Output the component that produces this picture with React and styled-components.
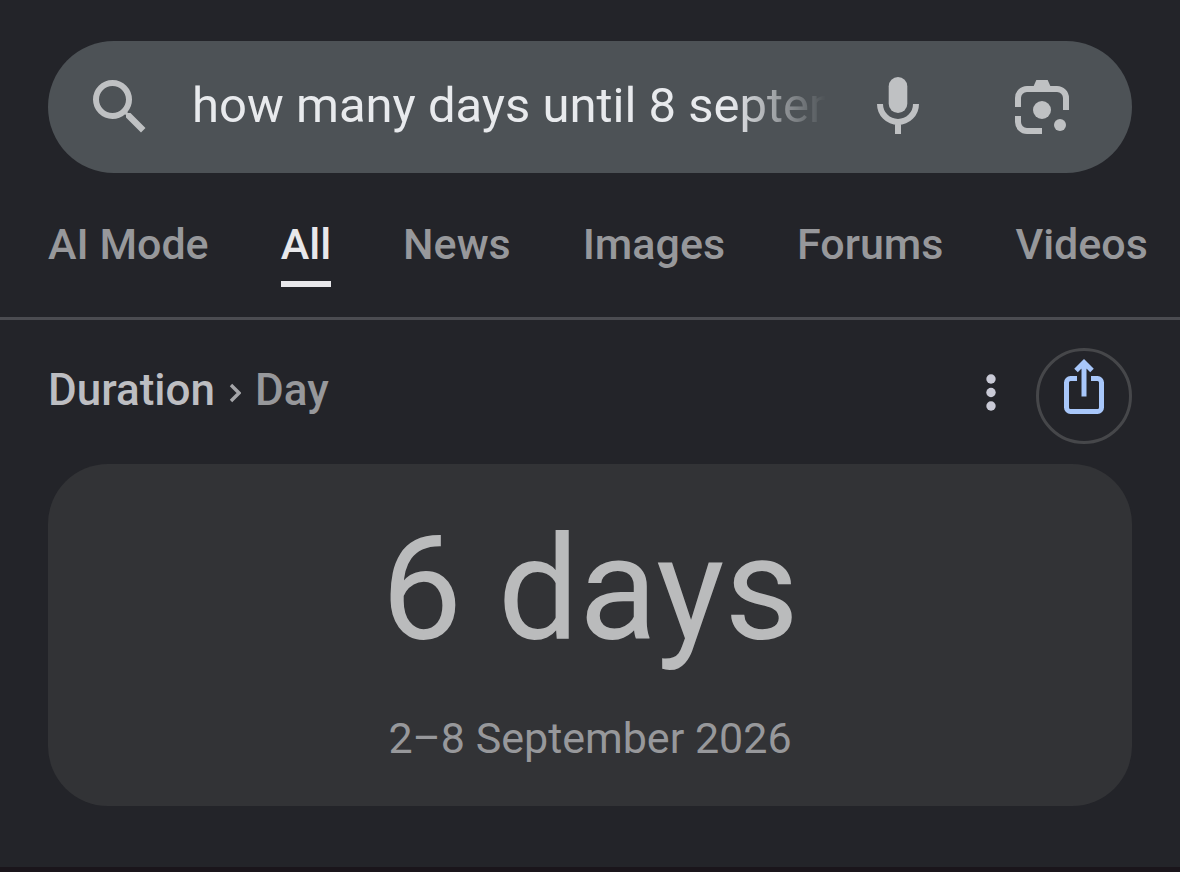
import React from "react"
import styled, { createGlobalStyle } from "styled-components"

const GlobalStyle = createGlobalStyle`
  * {
    box-sizing: border-box;
  }
  body {
    margin: 0;
    background-color: #232429;
    color: #bdbec2;
    font-family: Roboto, "Noto Sans", sans-serif;
  }
`

const Page = styled.div`
  min-height: 100vh;
  display: flex;
  flex-direction: column;
  padding-top: 41px;
  border-bottom: 5px solid #1a151b;
`

const SearchBar = styled.form`
  display: flex;
  align-items: center;
  height: 132px;
  margin: 0 48px;
  padding: 0 54px 0 36px;
  border-radius: 66px;
  background-color: #4d5256;
`

const SearchInput = styled.input`
  flex: 1;
  min-width: 0;
  height: 72px;
  margin: 0 36px;
  padding: 0 0 4px;
  border: 0;
  outline: 0;
  background: transparent;
  color: #e8eaed;
  font-family: inherit;
  font-size: 49px;
  mask-image: linear-gradient(to left, transparent, #000 96px);
`

const IconButton = styled.button`
  display: flex;
  align-items: center;
  justify-content: center;
  flex-shrink: 0;
  width: 72px;
  height: 72px;
  padding: 0;
  border: 0;
  background: transparent;
  color: ${props => props.$color || "#bfc1c3"};
  cursor: pointer;
`

const SearchActions = styled.div`
  display: flex;
  gap: 72px;
`

const Tabs = styled.nav`
  display: flex;
  gap: 72px;
  margin-top: 47px;
  padding: 0 0 30px 48px;
  border-bottom: 3px solid #4b4c51;
  overflow: hidden;
`

const Tab = styled.a`
  flex-shrink: 0;
  padding-bottom: 13px;
  border-bottom: 6px solid ${props => (props.$active ? "#e8e8eb" : "transparent")};
  color: ${props => (props.$active ? "#e8e8eb" : "#97989b")};
  font-size: 43px;
  font-weight: 500;
  line-height: 48px;
  text-decoration: none;
`

const ResultHeader = styled.header`
  display: flex;
  align-items: center;
  margin: 28px 48px 20px;
`

const Breadcrumb = styled.h2`
  flex: 1;
  display: flex;
  align-items: center;
  gap: 14px;
  margin: 0;
  padding-bottom: 12px;
  font-size: 44px;
  font-weight: 500;
  line-height: 48px;
`

const Topic = styled.span`
  color: ${props => (props.$muted ? "#97989b" : "#bdbec2")};
`

const ShareButton = styled(IconButton)`
  width: 96px;
  height: 96px;
  margin-left: 9px;
  border: 3px solid #46474a;
  border-radius: 50%;
`

const Card = styled.section`
  display: flex;
  flex-direction: column;
  align-items: center;
  margin: 0 48px;
  padding: 44px 24px;
  border-radius: 60px;
  background-color: #323336;
`

const Answer = styled.p`
  margin: 0;
  color: #babbbc;
  font-size: 144px;
  line-height: 164px;
`

const DateRange = styled.p`
  margin: 42px 0 0;
  color: #97989b;
  font-size: 43px;
  line-height: 48px;
`

const SearchIcon = () => (
  <svg width="72" height="72" viewBox="0 0 24 24" fill="currentColor">
    <path d="M15.5 14h-.79l-.28-.27A6.47 6.47 0 0 0 16 9.5 6.5 6.5 0 1 0 9.5 16c1.61 0 3.09-.59 4.23-1.57l.27.28v.79l5 4.99L20.49 19l-4.99-5zm-6 0C7.01 14 5 11.99 5 9.5S7.01 5 9.5 5 14 7.01 14 9.5 11.99 14 9.5 14z" />
  </svg>
)

const MicIcon = () => (
  <svg width="72" height="72" viewBox="0 0 24 24" fill="none">
    <rect x="8.9" y="2" width="6.2" height="12" rx="3.1" fill="currentColor" />
    <path
      d="M6 11a6 6 0 0 0 12 0M12 17v4"
      stroke="currentColor"
      strokeWidth="2"
    />
  </svg>
)

const LensIcon = () => (
  <svg width="72" height="72" viewBox="0 0 24 24" fill="none">
    <path
      d="M4 12V9a3 3 0 0 1 3-3h10a3 3 0 0 1 3 3v4M4 15v2a3 3 0 0 0 3 3h5"
      stroke="currentColor"
      strokeWidth="2"
    />
    <path d="M9 5.5L10.1 3h3.8L15 5.5z" fill="currentColor" />
    <circle cx="12" cy="13" r="3" fill="currentColor" />
    <circle cx="18" cy="18" r="2" fill="currentColor" />
  </svg>
)

const ChevronIcon = () => (
  <svg width="12" height="26" viewBox="0 0 12 26" fill="none">
    <path d="M2 8l8 8-8 8" stroke="#a5a6a9" strokeWidth="3.4" />
  </svg>
)

const MoreIcon = () => (
  <svg width="72" height="72" viewBox="0 0 72 72" fill="currentColor">
    <circle cx="36" cy="19" r="4.7" />
    <circle cx="36" cy="32.5" r="4.7" />
    <circle cx="36" cy="46" r="4.7" />
  </svg>
)

const ShareIcon = () => (
  <svg width="90" height="90" viewBox="0 0 90 90" fill="none">
    <path
      d="M38 27.5h-6.5a4 4 0 0 0-4 4v25a4 4 0 0 0 4 4h27a4 4 0 0 0 4-4v-25a4 4 0 0 0-4-4H52"
      stroke="currentColor"
      strokeWidth="5"
    />
    <path
      d="M45 45.5V12M37 19.5l8-8 8 8"
      stroke="currentColor"
      strokeWidth="5"
    />
  </svg>
)

const tabs = ["AI Mode", "All", "News", "Images", "Forums", "Videos"]

const App = () => {
  return (
    <>
      <GlobalStyle />
      <Page>
        <SearchBar role="search" onSubmit={e => e.preventDefault()}>
          <IconButton type="submit" aria-label="Search">
            <SearchIcon />
          </IconButton>
          <SearchInput
            type="text"
            aria-label="Search query"
            defaultValue="how many days until 8 september"
          />
          <SearchActions>
            <IconButton type="button" aria-label="Search by voice">
              <MicIcon />
            </IconButton>
            <IconButton type="button" aria-label="Search by image">
              <LensIcon />
            </IconButton>
          </SearchActions>
        </SearchBar>
        <Tabs>
          {tabs.map(tab => (
            <Tab
              key={tab}
              href="#"
              $active={tab === "All"}
              aria-current={tab === "All" ? "page" : undefined}
            >
              {tab}
            </Tab>
          ))}
        </Tabs>
        <main>
          <ResultHeader>
            <Breadcrumb>
              <Topic>Duration</Topic>
              <ChevronIcon />
              <Topic $muted>Day</Topic>
            </Breadcrumb>
            <IconButton type="button" aria-label="More options" $color="#c9cad6">
              <MoreIcon />
            </IconButton>
            <ShareButton type="button" aria-label="Share" $color="#a8c7fa">
              <ShareIcon />
            </ShareButton>
          </ResultHeader>
          <Card>
            <Answer>6 days</Answer>
            <DateRange>2–8 September 2026</DateRange>
          </Card>
        </main>
      </Page>
    </>
  )
}

export default App
